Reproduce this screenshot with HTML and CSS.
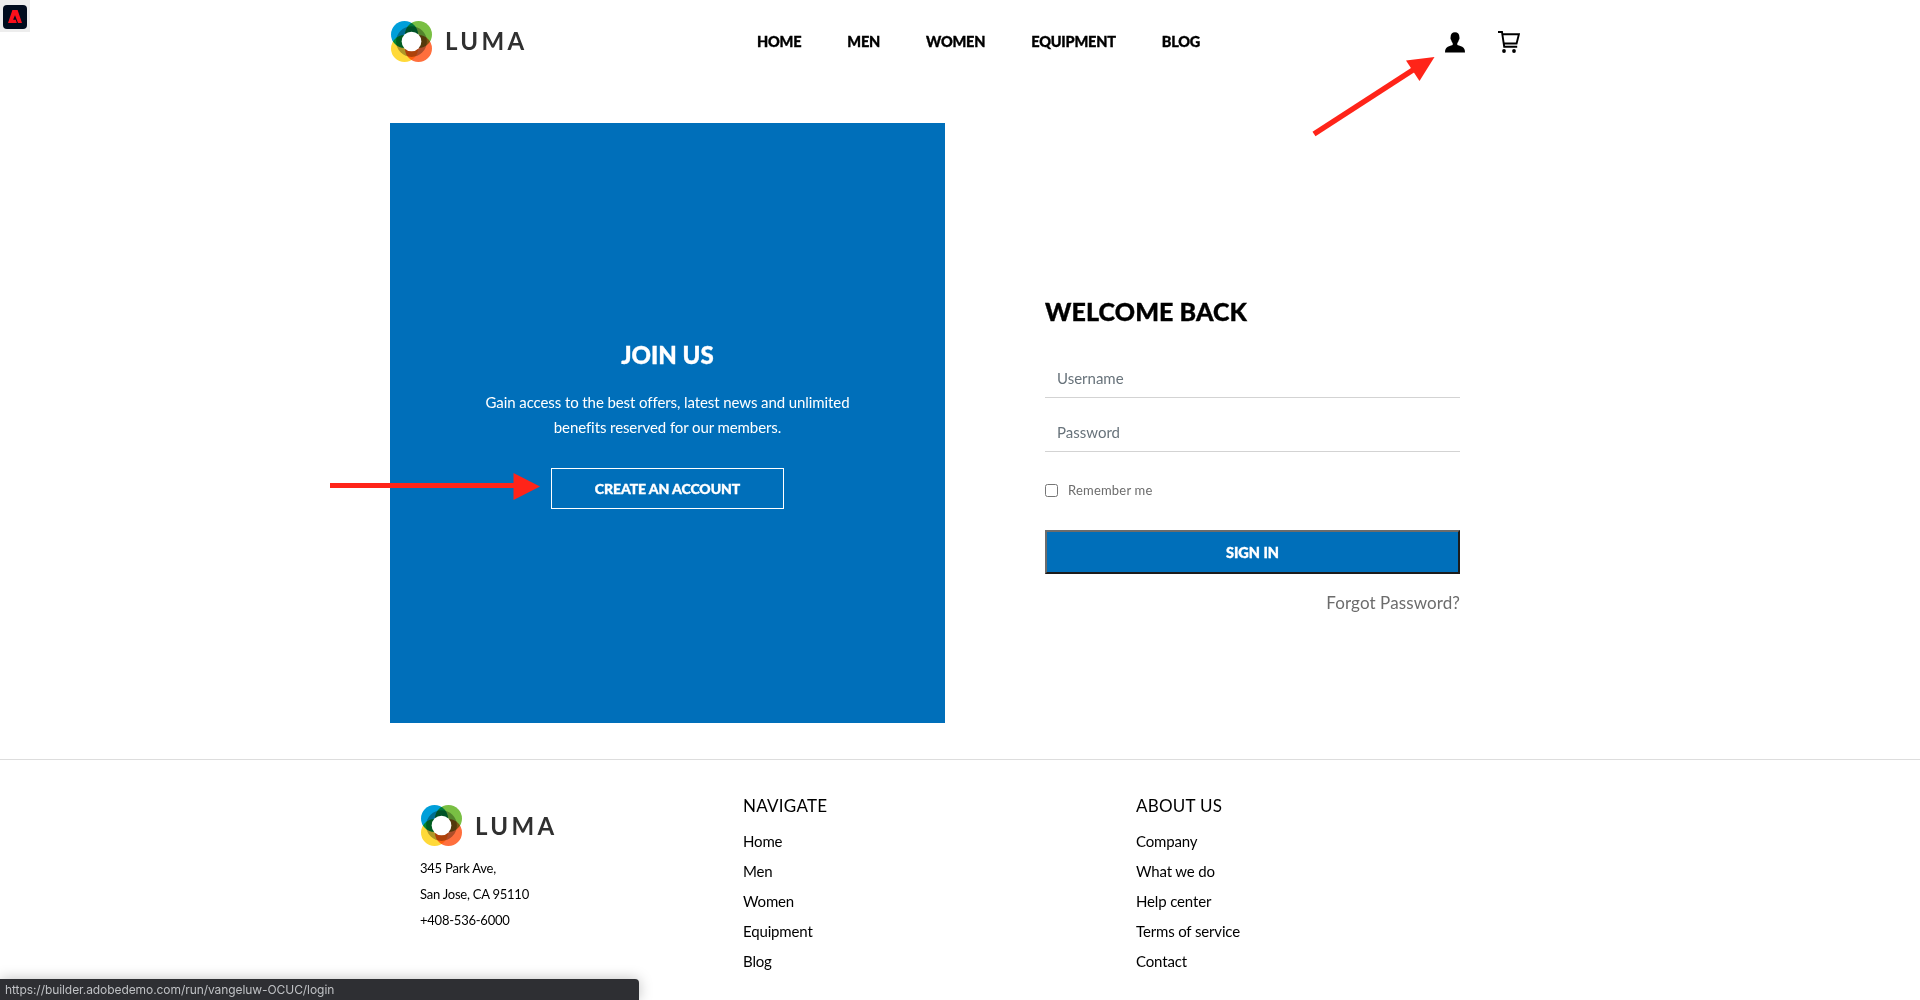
FILE: index.html
```
<!DOCTYPE html>
<html lang="en">
<head>
<meta charset="utf-8">
<title>Luma</title>
<link rel="stylesheet" href="styles.css">
</head>
<body>
<svg class="defs" aria-hidden="true">
  <symbol id="luma" viewBox="0 0 40 40">
    <g class="petals">
      <circle cx="13.2" cy="13.2" r="13.2" fill="#009fda"/>
      <circle cx="26.8" cy="13.2" r="13.2" fill="#79bf43"/>
      <circle cx="13.2" cy="26.8" r="13.2" fill="#ffd939"/>
      <circle cx="26.8" cy="26.8" r="13.2" fill="#ff6f3d"/>
      <circle cx="20" cy="20" r="15" fill="#aeb0a8"/>
    </g>
    <circle cx="20" cy="20" r="9.6" fill="#fff"/>
  </symbol>
</svg>

<header class="header">
  <a class="logo"><svg class="logo-mark"><use href="#luma"/></svg><span class="logo-name">LUMA</span></a>
  <nav class="nav"><a>HOME</a><a>MEN</a><a>WOMEN</a><a>EQUIPMENT</a><a>BLOG</a></nav>
  <div class="tools">
    <svg class="icon-user" viewBox="0 0 20 21"><path d="M10 .3c-2.8 0-4.4 2-4.4 4.7 0 .6-.2.8-.1 1.500.1.8.5 1.100.7 1.400.3 1.500.8 2.300 1.500 3v2.200c-1.400.5-3.300.9-4.900 1.600C.8 15.700 0 17.500 0 20.500h20c0-3-.8-4.800-2.800-5.800-1.600-.7-3.500-1.100-4.900-1.600v-2.200c.7-.7 1.200-1.500 1.500-3 .2-.3.600-.6.700-1.400.1-.7-.1-.9-.1-1.500C14.400 2.300 12.800.3 10 .3z"/></svg>
    <svg class="icon-cart" viewBox="0 0 22 22"><path d="M0 1h4l2.200 14.700h13M4.200 3.300h16.700l-2.300 9.200H5.700M5.900 12.500l.3 3.200" fill="none" stroke="#000" stroke-width="1.900"/><circle cx="6" cy="20" r="1.900"/><circle cx="16" cy="20" r="1.900"/></svg>
  </div>
</header>

<main class="main">
  <section class="join">
    <h2 class="join-title">JOIN US</h2>
    <p class="join-text">Gain access to the best offers, latest news and unlimited<br>benefits reserved for our members.</p>
    <a class="join-button">CREATE AN ACCOUNT</a>
  </section>
  <form class="login">
    <h2 class="login-title">WELCOME BACK</h2>
    <input class="field" type="text" placeholder="Username">
    <input class="field" type="password" placeholder="Password">
    <label class="remember"><input class="check" type="checkbox">Remember me</label>
    <button class="signin" type="button">SIGN IN</button>
    <a class="forgot">Forgot Password?</a>
  </form>
</main>

<footer class="footer">
  <div class="contact">
    <a class="logo"><svg class="logo-mark"><use href="#luma"/></svg><span class="logo-name">LUMA</span></a>
    <address class="address">345 Park Ave,<br>San Jose, CA 95110<br>+408-536-6000</address>
  </div>
  <div class="links">
    <h3 class="links-title">NAVIGATE</h3>
    <a>Home</a><a>Men</a><a>Women</a><a>Equipment</a><a>Blog</a>
  </div>
  <div class="links">
    <h3 class="links-title">ABOUT US</h3>
    <a>Company</a><a>What we do</a><a>Help center</a><a>Terms of service</a><a>Contact</a>
  </div>
</footer>

<div class="badge"><svg viewBox="0 0 24 24"><rect width="24" height="24" rx="4" fill="#000b1d"/><path d="M9.400 5h5.200L19 18h-4l-3-7.800-1.900 4.600h2.700l1 3.200H5z" fill="#fa0f1b"/></svg></div>
<svg class="arrow arrow-user" viewBox="0 0 124 82"><path d="M2 78 104 12" stroke="#ff2419" stroke-width="5.500"/><path d="M122.500 1 94 4.500l13.500 20.500z" fill="#ff2419"/></svg>
<svg class="arrow arrow-join" viewBox="0 0 212 28"><path d="M0 12.500h186" stroke="#ff2419" stroke-width="5"/><path d="M183.500 0v27l26.500-13.500z" fill="#ff2419"/></svg>
<div class="status">https://builder.adobedemo.com/run/vangeluw-OCUC/login</div>
</body>
</html>
```

FILE: styles.css
```
* { box-sizing: border-box; }
body {
  margin: 0;
  height: 1000px;
  overflow: hidden;
  background: #fff;
  color: #000;
  font-family: Lato, "Liberation Sans", sans-serif;
}
h2, h3, p { margin: 0; }
.defs { position: absolute; width: 0; height: 0; }
.petals { isolation: isolate; }
.petals circle { mix-blend-mode: multiply; }

.header {
  display: flex;
  align-items: center;
  height: 82px;
  padding-left: 391px;
}
.logo { display: flex; align-items: center; width: 135px; }
.logo-mark { flex: none; width: 41px; height: 41px; }
.logo-name {
  margin-left: 12px;
  padding-left: 1px;
  color: #303030;
  font-size: 24px;
  font-weight: 700;
  line-height: 40px;
  letter-spacing: 3.300px;
}
.nav {
  display: flex;
  gap: 46px;
  margin-left: 231px;
  width: 688px;
  padding-top: 1px;
  font-size: 14.500px;
  font-weight: 900;
  letter-spacing: -0.200px;
  line-height: 20px;
}
.nav, .join-title, .join-button, .login-title, .signin { -webkit-text-stroke: 0.350px currentColor; }
.tools { display: flex; gap: 33px; align-items: center; padding-top: 2px; }
.icon-user { width: 20px; height: 21px; }
.icon-cart { width: 22px; height: 22px; }

.main { display: flex; gap: 100px; height: 600px; margin: 41px 0 36px 390px; }
.join {
  display: flex;
  flex-direction: column;
  align-items: center;
  width: 555px;
  padding-top: 217px;
  background: #006fba;
  color: #fff;
  text-align: center;
}
.join-title { font-size: 24px; font-weight: 900; line-height: 30px; }
.join-text { margin: 20px 0 28px; font-size: 15px; line-height: 25px; letter-spacing: -0.090px; }
.join-button {
  width: 233px;
  height: 41px;
  border: 1px solid #fff;
  font-size: 14px;
  font-weight: 900;
  line-height: 39px;
  letter-spacing: -0.080px;
}
.login { display: flex; flex-direction: column; width: 415px; padding-top: 173px; }
.login-title { margin-bottom: 34px; font-size: 25px; font-weight: 900; line-height: 30px; letter-spacing: 0.100px; }
.field {
  width: 100%;
  height: 38px;
  margin: 0 0 16px;
  padding: 0 12px 1px;
  border: 0;
  border-bottom: 1px solid #d3d3d3;
  font: 15px Lato, sans-serif;
}
.field::placeholder { color: #68737b; }
.remember {
  display: flex;
  align-items: center;
  height: 20px;
  margin: 12px 0 30px;
  color: #6c6c6c;
  font-size: 13px;
  letter-spacing: 0.200px;
}
.check { width: 13px; height: 13px; margin: 0 10px 0 0; }
.signin {
  height: 44px;
  padding: 0;
  border: 2px solid;
  border-color: #6c6c6c #1c1c1c #1c1c1c #6c6c6c;
  background: #006fba;
  color: #fff;
  font: 900 14.500px Lato, sans-serif;
}
.forgot { margin-top: 18px; color: #6c6c6c; font-size: 17px; line-height: 22px; letter-spacing: 0.100px; text-align: right; }

.footer { display: flex; height: 241px; padding: 35px 0 0 420px; border-top: 1px solid #ddd; }
.contact { width: 323px; padding: 10px 0 0 1px; }
.address { margin: 9px 0 0 -1px; font-size: 13px; font-style: normal; line-height: 26px; letter-spacing: -0.230px; }
.links {
  display: flex;
  flex-direction: column;
  width: 393px;
  font-size: 15px;
  line-height: 30px;
  letter-spacing: -0.150px;
}
.links-title { margin-bottom: 9px; font-size: 17px; font-weight: 400; line-height: 22px; letter-spacing: 0.250px; }

/* Overlays */
.badge { position: absolute; left: 0; top: 0; width: 30px; height: 32px; padding: 5px 3px; background: #ededed; }
.badge svg { display: block; width: 24px; height: 24px; }
.arrow { position: absolute; }
.arrow-user { left: 1312px; top: 56px; width: 124px; height: 82px; }
.arrow-join { left: 330px; top: 473px; width: 212px; height: 28px; }
.status {
  position: absolute;
  left: 0;
  bottom: 0;
  width: 639px;
  height: 21px;
  padding-left: 5px;
  border-radius: 0 4px 0 0;
  background: #2e2f33;
  box-shadow: 0 0 14px rgba(0, 0, 0, 0.250);
  color: #bfc1c4;
  font: 12px/21px Inter, sans-serif;
  letter-spacing: -0.070px;
}
```
